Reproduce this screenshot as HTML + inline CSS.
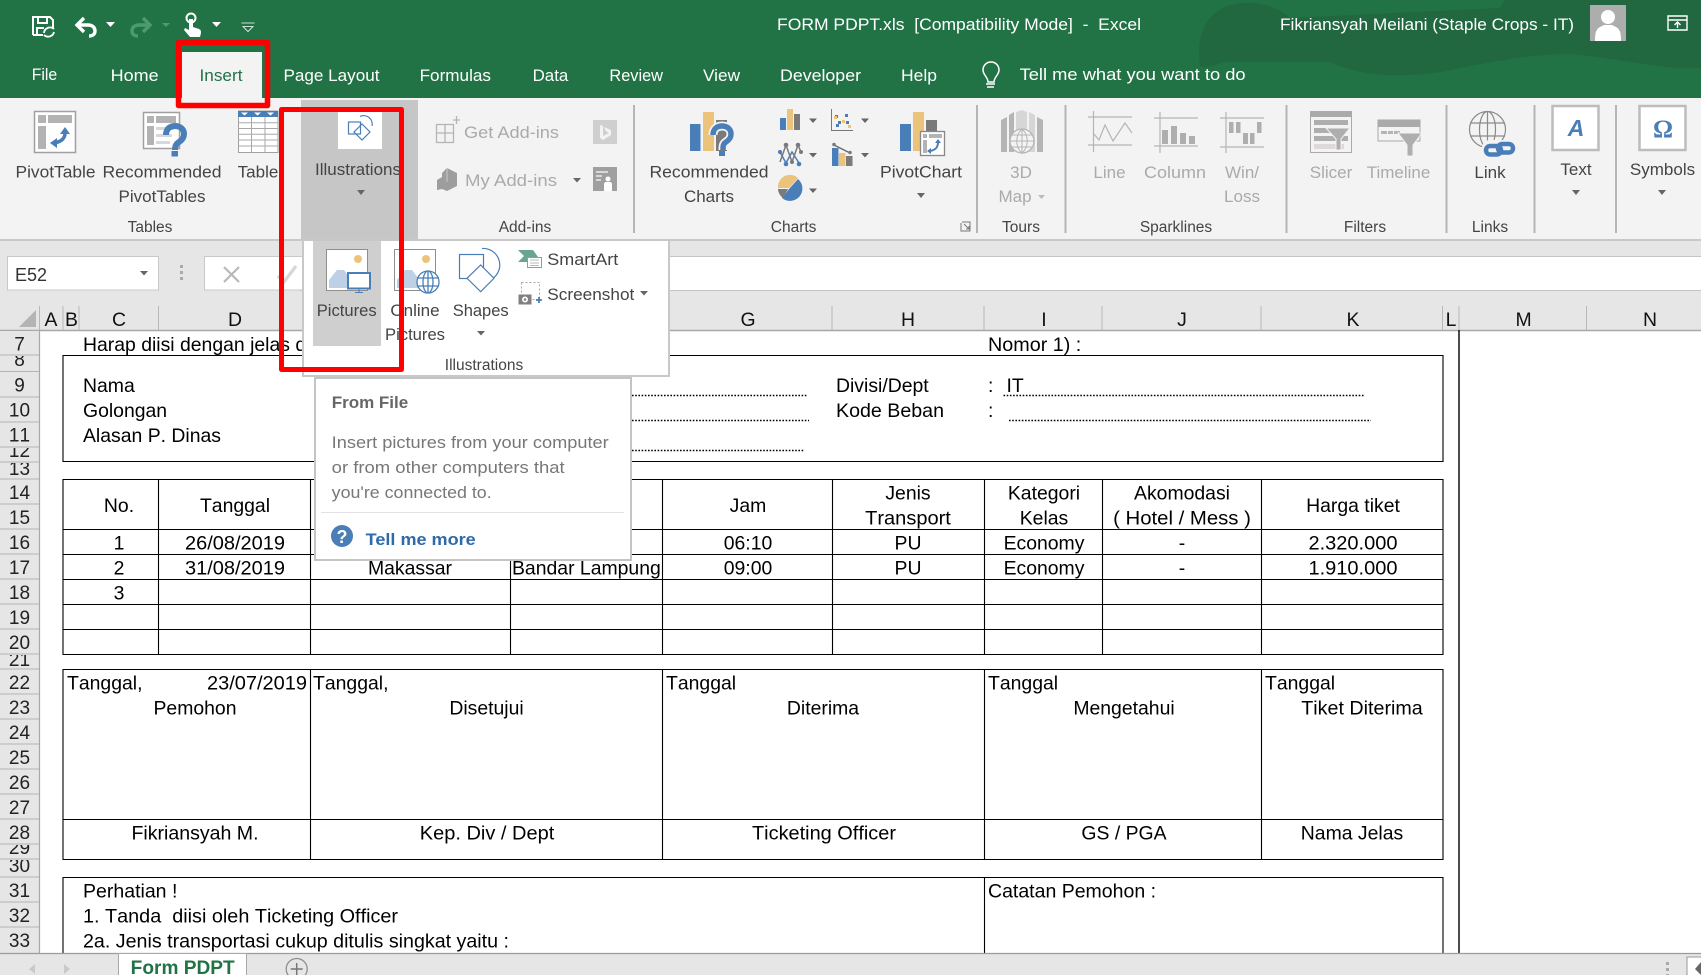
<!DOCTYPE html>
<html lang="en"><head><meta charset="utf-8"><title>FORM PDPT.xls - Excel</title>
<style>
html,body{margin:0;padding:0;background:#fff;overflow:hidden;width:1701px;height:975px}
svg{display:block}
text{font-family:"Liberation Sans",Arial,sans-serif;white-space:pre}
.s{font-size:19.4px;fill:#000;font-kerning:none}
.m{text-anchor:middle}
.r{font-size:17px;fill:#444}
.d{font-size:17px;fill:#aaa}
.t{font-size:17px;fill:#fff}
.h{font-size:19.4px;fill:#111;text-anchor:middle;font-kerning:none}
.n{font-size:19px;fill:#222;text-anchor:middle;font-kerning:none}
.l{fill:none;stroke:#000;stroke-width:1.1}
.b{fill:#4a7eb8}.y{fill:#ecc37a}.g{fill:#7a7a7a}
.a{fill:#666}
</style></head><body>
<svg width="1701" height="975" viewBox="0 0 1701 975" xmlns="http://www.w3.org/2000/svg">
<!-- title bar -->
<rect width="1701" height="98" fill="#217346"/>
<path d="M1200 66C1195 30 1210 4 1245 3C1262 2 1280 8 1290 18L1500 8L1505 0H1701V68C1660 70 1620 58 1570 54C1530 54 1490 62 1440 72C1400 78 1360 76 1330 62C1300 62 1250 62 1225 62C1215 64 1205 70 1200 66z" fill="#21653f" opacity=".85"/>
<!-- QAT -->
<g fill="none" stroke="#fff">
<path d="M33 35V17h17l3 3v9M33 35h10M37 35v-7h7M38 17v6h9v-6" stroke-width="2"/>
<path d="M44 33a6 6 0 0 1 10-4M54 32a6 6 0 0 1-10 3" stroke-width="1.8"/>
<path d="M77 25h11c5 0 7 3 7 6 0 3-2 5-6 5" stroke-width="3.4"/>
<path d="M84 18l-7 7 7 7" stroke-width="3.4"/>
<path d="M150 25h-11c-5 0-7 3-7 6 0 3 2 5 6 5M143 18l7 7-7 7" stroke="#4e9a6f" stroke-width="3.4"/>
<circle cx="191" cy="18" r="4.5" stroke-width="2"/>
</g>
<path d="M189 19h4v8l6 2c2 1 2 2 2 4l-1 4h-10l-6-7 1-2 4 2z" fill="#fff"/>
<path d="M106 22h9l-4.500 5z M212 22h9l-4.500 5z" fill="#fff"/><path d="M162 23h8l-4 4z" fill="#4e9a6f"/>
<path d="M241.500 23h13M243 26.500h10l-5 5z" fill="none" stroke="#fff" stroke-width=".8"/>
<!-- title text -->
<text class="t" x="777" y="30" textLength="364" lengthAdjust="spacingAndGlyphs">FORM PDPT.xls  [Compatibility Mode]  -  Excel</text>
<text class="t" x="1280" y="30" textLength="294" lengthAdjust="spacingAndGlyphs">Fikriansyah Meilani (Staple Crops - IT)</text>
<rect x="1590" y="5" width="36" height="36" fill="#adadad"/>
<circle cx="1608" cy="17" r="7" fill="#fff"/>
<path d="M1595 41c0-8 1-12 5-14l4-2h8l4 2c4 2 5 6 5 14z" fill="#fff"/>
<path d="M1668 16h19v14h-19zM1668 20h19M1677.500 28v-6M1674.500 25l3-3 3 3" fill="none" stroke="#fff" stroke-width="1.400"/>
<!-- tabs -->
<rect x="182" y="52" width="80" height="46" fill="#f3f3f3"/>
<text class="t" x="31.700" y="80" textLength="25.500" lengthAdjust="spacingAndGlyphs">File</text>
<text class="t" x="110.700" y="81" textLength="48" lengthAdjust="spacingAndGlyphs">Home</text>
<text x="199.500" y="81" textLength="43" lengthAdjust="spacingAndGlyphs" style="font-size:17px;fill:#217346">Insert</text>
<text class="t" x="283.500" y="81" textLength="96" lengthAdjust="spacingAndGlyphs">Page Layout</text>
<text class="t" x="419.600" y="81" textLength="71.400" lengthAdjust="spacingAndGlyphs">Formulas</text>
<text class="t" x="532.600" y="81" textLength="35.700" lengthAdjust="spacingAndGlyphs">Data</text>
<text class="t" x="609.400" y="81" textLength="53.600" lengthAdjust="spacingAndGlyphs">Review</text>
<text class="t" x="703" y="81" textLength="37" lengthAdjust="spacingAndGlyphs">View</text>
<text class="t" x="780" y="81" textLength="81" lengthAdjust="spacingAndGlyphs">Developer</text>
<text class="t" x="901" y="81" textLength="36" lengthAdjust="spacingAndGlyphs">Help</text>
<path d="M986 84h9M987 87h7M991 62c-5 0-8 4-8 8 0 5 5 7 5 12h6c0-5 5-7 5-12 0-4-3-8-8-8z" fill="none" stroke="#fff" stroke-width="1.500"/>
<text class="t" x="1019.600" y="80" textLength="226" lengthAdjust="spacingAndGlyphs">Tell me what you want to do</text>
<!-- ribbon -->
<rect y="98" width="1701" height="141" fill="#f3f3f3"/>
<rect y="239" width="1701" height="2" fill="#c8c8c8"/>
<rect x="301" y="100" width="117" height="139" fill="#c6c6c6"/>
<g fill="#b5b5b5">
<rect x="633" y="105" width="2" height="128"/><rect x="976" y="105" width="2" height="128"/><rect x="1064.500" y="105" width="2" height="128"/><rect x="1285.500" y="105" width="2" height="128"/><rect x="1445.500" y="105" width="2" height="128"/><rect x="1533.500" y="105" width="2" height="128"/><rect x="1615" y="105" width="2" height="128"/>
</g>
<!-- PivotTable icon -->
<rect x="34.500" y="111.500" width="41" height="41" fill="#fff" stroke="#a0a0a0" stroke-width="1.500"/>
<path d="M38 115h8v8h-8zM48 115h24v8H48zM38 126h8v23h-8z" fill="#b3b3b3"/>
<path d="M65 130c1 8-3 12-12 13M51 143" fill="none" stroke="#4a7eb8" stroke-width="3.500"/>
<path d="M60 134l5-7 5 7zM57 138v10l-7-5z" fill="#4a7eb8"/>
<!-- Recommended PivotTables -->
<rect x="143.500" y="112.500" width="36" height="36" fill="#fff" stroke="#a0a0a0" stroke-width="1.500"/>
<path d="M147 116h7v7h-7zM156 116h20v7h-20zM147 126h7v19h-7z" fill="#b3b3b3"/><path d="M156 127h18v3h-18zM156 134h16v3h-16zM156 141h14v3h-14z" fill="#d8d8d8"/>
<path d="M166 135c0-6 4-9 9-9 5 0 9 3 9 8 0 4-2 6-5 8-3 2-4 4-4 8" fill="none" stroke="#4a7eb8" stroke-width="6"/>
<rect x="171.500" y="151" width="6.500" height="5.500" fill="#4a7eb8"/>
<!-- Table icon -->
<rect x="238.500" y="111" width="39.500" height="41.500" fill="#fff" stroke="#a0a0a0"/>
<rect x="238" y="111" width="40" height="6" fill="#4a7eb8"/>
<path d="M241 112.500h7l-3.500 3zM254 112.500h7l-3.500 3zM267 112.500h7l-3.500 3z" fill="#fff"/>
<path d="M251.500 117v35M265 117v35M238 122.700h40M238 128.500h40M238 134.300h40M238 140h40M238 146h40" stroke="#a8a8a8" fill="none"/>
<!-- Illustrations -->
<rect x="338" y="112" width="44" height="37" fill="#fff"/>
<g fill="none" stroke="#4a7eb8" stroke-width="1.200"><rect x="348.500" y="122" width="12" height="12"/><path d="M360 116.500a8.500 8.500 0 0 1 12 9.500M362 124l8 8-8 8-8-8z"/></g>
<text class="r" x="358" y="175" text-anchor="middle" textLength="86" lengthAdjust="spacingAndGlyphs">Illustrations</text>
<text class="r m" x="55.500" y="177.500" textLength="80" lengthAdjust="spacingAndGlyphs">PivotTable</text>
<text class="r m" x="162" y="177.500" textLength="119" lengthAdjust="spacingAndGlyphs">Recommended</text>
<text class="r m" x="162" y="202">PivotTables</text>
<text class="r m" x="258" y="177.500">Table</text>
<text x="150" y="232" class="r m" style="font-size:15.500px">Tables</text>
<path d="M357 190h8l-4 5z M1572 190h8l-4 5z M1658 190h8l-4 5z M917 193h8l-4 5z" class="a"/>
<!-- add-ins -->
<g fill="none" stroke="#b5b5b5" stroke-width="1.300"><rect x="436.500" y="124.500" width="17" height="18"/><path d="M445 125v17M437 133h17M453 120h7M456.500 116v8"/></g>
<text class="d" x="464" y="138" textLength="95" lengthAdjust="spacingAndGlyphs">Get Add-ins</text>
<rect x="593" y="120" width="24" height="24" fill="#cfcfcf"/><path d="M600 125l3 1v10l6-3-3-2-2-4 7 3v5l-8 5-3-2z" fill="#f3f3f3"/>
<text class="d" x="465" y="186" textLength="92" lengthAdjust="spacingAndGlyphs">My Add-ins</text>
<path d="M447 168l10 5v13l-10 5-5-2-5 1v-10l5-3v-4z" fill="#9d9d9d"/><path d="M447 168v14" stroke="#c9c9c9"/>
<path d="M573 178h8l-4 4.500z" class="a"/>
<rect x="593" y="167" width="24" height="24" fill="#9f9f9f"/><path d="M596 171h12v2h-12zM596 175h6v2h-6zM596 179h5v2h-5z" fill="#d8d8d8"/><circle cx="608" cy="179" r="2.500" fill="#fff"/><path d="M604 191v-7c0-1 1-2 2-2h4c1 0 2 1 2 2v7z" fill="#fff"/>
<text x="525" y="232" class="r m" style="font-size:15.500px">Add-ins</text>
<!-- recommended charts -->
<rect class="b" x="690" y="124" width="10.500" height="27"/><rect class="y" x="703" y="112" width="11" height="39"/><rect class="g" x="716" y="120" width="11" height="31"/>
<path d="M713 135c0-6 4-9 9-9 5 0 9 3 9 8 0 4-2 6-5 8-3 2-3 4-3 8" fill="none" stroke="#f3f3f3" stroke-width="9"/>
<path d="M713 135c0-6 4-9 9-9 5 0 9 3 9 8 0 4-2 6-5 8-3 2-3 4-3 8" fill="none" stroke="#4a7eb8" stroke-width="5.500"/>
<rect x="719" y="151" width="6" height="5" fill="#4a7eb8"/>
<text class="r m" x="709" y="177.500" textLength="119" lengthAdjust="spacingAndGlyphs">Recommended</text>
<text class="r m" x="709" y="202">Charts</text>
<!-- small charts -->
<rect class="b" x="780" y="118" width="6" height="12"/><rect class="y" x="787" y="109" width="6" height="21"/><rect class="g" x="794" y="114" width="6" height="16"/>
<path d="M831.500 109v21.500H853" fill="none" stroke="#777"/>
<path d="M835 115h3v3h-3zM845 114h3v3h-3zM846 121h3v3h-3zM838 121h3v3h-3zM836 124h3v3h-3z" class="b"/>
<path d="M842 120h3v3h-3zM848 125h3v3h-3zM834 116h3v3h-3z" class="y"/>
<path d="M780 152l6 11 6-11 7 11" fill="none" stroke="#4a7eb8" stroke-width="1.500"/><path d="M780 162l6-17 6 17 6-17 3 7" fill="none" stroke="#7a7a7a" stroke-width="1.500"/>
<circle class="g" cx="786" cy="145" r="2.300"/><circle class="g" cx="798" cy="145" r="2.300"/><circle class="g" cx="792" cy="162" r="2"/><circle class="b" cx="780" cy="152" r="2"/><circle class="b" cx="786" cy="164" r="2.300"/><circle class="b" cx="799" cy="164" r="2.300"/><circle class="g" cx="801" cy="152" r="2"/>
<rect class="b" x="832" y="148" width="6.500" height="18"/><rect class="y" x="839" y="153" width="6.500" height="13"/><rect class="g" x="846" y="156" width="6.500" height="10"/>
<path d="M834 145l16 8" stroke="#666" stroke-width="1.300"/><circle class="g" cx="834" cy="144.500" r="1.800"/><circle class="g" cx="850" cy="152.500" r="1.800"/>
<path d="M789 189l9-10a12 12 0 1 1-16 19z" class="b"/><path d="M778 188a12 12 0 0 1 20-10l-9 10z" class="y"/><path d="M778 189h10l-5 9c-3-2-5-6-5-9z" class="g"/>
<path d="M809 118.500h8l-4 4.500zM861 118.500h8l-4 4.500zM809 153h8l-4 4.500zM861 153h8l-4 4.500zM809 188.500h8l-4 4.500z" class="a"/>
<!-- pivot chart -->
<rect class="b" x="900" y="124" width="11" height="27"/><rect class="y" x="913" y="112" width="11" height="39"/><rect class="g" x="926" y="120" width="11" height="18"/>
<rect x="920.500" y="131.500" width="24" height="24" fill="#fff" stroke="#888" stroke-width="1.300"/>
<path d="M923 134h4v4h-4zM929 134h13v4h-13zM923 140h4v13h-4z" fill="#b3b3b3"/>
<path d="M938 142c0 5-2 8-8 9" fill="none" stroke="#4a7eb8" stroke-width="2"/><path d="M935 143l3-4 3 4zM931 148v6l-4-3z" class="b"/>
<text class="r m" x="921" y="177.500" textLength="82" lengthAdjust="spacingAndGlyphs">PivotChart</text>
<text x="793.600" y="232" class="r m" style="font-size:15.500px">Charts</text>
<path d="M962 222h8v9h-9v-8M964 224l5 5M969 226v3h-3" fill="none" stroke="#777"/>
<!-- 3d map -->
<path d="M1001 120l6-3v35h-6zM1009 115l5-3v40h-5zM1037 117l6 3v32h-6z" fill="#b5b5b5"/><path d="M1016 112l6-2 5 2v40h-11zM1029 112l6 3v37h-6z" fill="#d6d6d6"/>
<circle cx="1022" cy="141" r="12" fill="#f3f3f3" stroke="#b5b5b5" stroke-width="1.300"/><path d="M1010 141h24M1022 129v24M1012 135h20M1012 147h20M1022 129c-7 6-7 18 0 24M1022 129c7 6 7 18 0 24" fill="none" stroke="#b5b5b5"/>
<text class="d m" x="1021" y="178">3D</text><text class="d m" x="1015" y="202">Map</text><path d="M1038 195h7l-3.500 4z" fill="#bbb"/>
<text x="1021" y="232" class="r m" style="font-size:15.500px">Tours</text>
<!-- sparklines -->
<g stroke="#b5b5b5" fill="none" stroke-width="1.200">
<path d="M1088 117h44M1088 145h44M1093.500 111v41M1093 133l6 7 6-15 8 16 12-18 7 10"/>
<path d="M1154 118h44M1154 146h44M1160 112v41"/>
<path d="M1220 118h44M1220 147h44M1226 112v41"/>
</g>
<path d="M1162 130h6v14h-6zM1171 126h6v18h-6zM1180 133h6v11h-6zM1189 136h6v8h-6zM1229 122h4.500v11h-4.500zM1236 122h4.500v11h-4.500zM1243 133h5v11h-5zM1250 133h4.500v11h-4.500zM1257 122h4.500v11h-4.500z" fill="#aeaeae"/>
<text class="d m" x="1109.500" y="178">Line</text><text class="d m" x="1175" y="178" textLength="62" lengthAdjust="spacingAndGlyphs">Column</text><text class="d m" x="1242" y="178">Win/</text><text class="d m" x="1242" y="202">Loss</text>
<text x="1176" y="232" class="r m" style="font-size:15.500px">Sparklines</text>
<!-- filters -->
<rect x="1310.500" y="111.500" width="41" height="41" fill="#f3f3f3" stroke="#aaa"/><rect x="1310" y="111" width="42" height="6" fill="#aaa"/>
<path d="M1314 120h34v5h-34zM1314 128h18v5h-18zM1314 136h34v5h-34z" fill="#aeaeae"/><path d="M1314 144h30v5h-30z" fill="#dcd8dc"/>
<path d="M1326 128h24l-9 11v11h-5v-11z" fill="#aeaeae" stroke="#f3f3f3"/>
<rect x="1378" y="120" width="42" height="21" fill="#f3f3f3" stroke="#aaa"/><rect x="1378" y="120" width="42" height="7" fill="#aaa"/>
<path d="M1381 131h6v3h-6zM1388 131h5v3h-5zM1394 131h6v3h-6z" fill="#b5b5b5"/>
<path d="M1398 133h24l-9 12v11h-6v-11z" fill="#aeaeae" stroke="#f3f3f3"/>
<text class="d m" x="1331" y="178">Slicer</text><text class="d m" x="1398.500" y="178">Timeline</text>
<text x="1365" y="232" class="r m" style="font-size:15.500px">Filters</text>
<!-- link -->
<g fill="none" stroke="#8a8a8a" stroke-width="1.200"><circle cx="1487.500" cy="129.500" r="18"/><ellipse cx="1487.500" cy="129.500" rx="8" ry="18"/><path d="M1487.500 111v37M1470 123h35M1470 136h35"/></g>
<rect x="1482" y="140" width="34" height="18" fill="#f3f3f3" rx="8"/>
<g fill="none" stroke="#4a7eb8" stroke-width="4.500"><rect x="1486" y="146" width="15" height="8.500" rx="4.200"/><rect x="1498" y="144" width="15" height="8.500" rx="4.200"/></g>
<text class="r m" x="1490" y="178">Link</text>
<text x="1490" y="232" class="r m" style="font-size:15.500px">Links</text>
<!-- text / symbols -->
<rect x="1552.500" y="106" width="46" height="44" fill="#fff" stroke="#bcbcbc" stroke-width="2.500"/>
<text x="1576" y="136" text-anchor="middle" style="font-style:italic;font-size:23px;fill:#4a7eb8;font-weight:bold">A</text>
<text class="r m" x="1576" y="175">Text</text>
<rect x="1639.500" y="106" width="46" height="44" fill="#fff" stroke="#bcbcbc" stroke-width="2.500"/>
<text x="1663" y="137" text-anchor="middle" style="font-family:'Liberation Serif',serif;font-weight:bold;font-size:25px;fill:#4a7eb8">Ω</text>
<text class="r m" x="1662.500" y="175">Symbols</text>
<!-- formula area -->
<rect y="241" width="1701" height="89" fill="#e6e6e6"/>
<rect x="300" y="256" width="1401" height="34" fill="#fff"/><path d="M300 256.500h1401M300 290.500h1401" stroke="#c4c4c4"/>
<rect x="7.500" y="256.500" width="151" height="33.500" fill="#fff" stroke="#c8c8c8"/>
<text x="15" y="281" style="font-size:18px;fill:#333">E52</text>
<path d="M140 271h8l-4 4.500z" class="a"/>
<path d="M180 265h3v3h-3zM180 271h3v3h-3zM180 277h3v3h-3z" fill="#aaa"/>
<rect x="204.500" y="256.500" width="110" height="33.500" fill="#fff" stroke="#c8c8c8"/>
<path d="M224 267l15 15M239 267l-15 15" stroke="#b8b8b8" stroke-width="2.200"/><path d="M278 276l6 6 12-16" fill="none" stroke="#d6d6d6" stroke-width="3.200"/>
<!-- headers -->
<path d="M0 330.500h1701" stroke="#a8a8a8" stroke-width="1.400"/>
<path d="M36 310v17H19z" fill="#b4b4b4"/>
<g stroke="#b8b8b8"><path d="M39.500 306v24M63 306v24M79 306v24M158.500 306v24M310.500 306v24M510 306v24M662 306v24M832 306v24M984 306v24M1102 306v24M1261 306v24M1442.500 306v24M1459 306v24M1586.500 306v24"/></g>
<text class="h" x="51" y="326">A</text><text class="h" x="71.500" y="326">B</text><text class="h" x="119" y="326">C</text><text class="h" x="235" y="326">D</text><text class="h" x="748" y="326">G</text><text class="h" x="908" y="326">H</text><text class="h" x="1044" y="326">I</text><text class="h" x="1182" y="326">J</text><text class="h" x="1353" y="326">K</text><text class="h" x="1451" y="326">L</text><text class="h" x="1523.600" y="326">M</text><text class="h" x="1650" y="326">N</text>
<!-- row headers -->
<rect y="331" width="39.500" height="622" fill="#e6e6e6"/>
<path d="M39.500 331v622" stroke="#a8a8a8" stroke-width="1.200"/>
<g stroke="#b4b4b4"><path d="M0 355h39M0 371.500h39M0 397h39M0 422h39M0 447h39M0 462h39M0 479h39M0 504h39M0 529h39M0 554h39M0 579h39M0 604h39M0 629h39M0 654h39M0 669h39M0 694h39M0 719h39M0 744h39M0 769h39M0 794h39M0 819h39M0 844h39M0 859h39M0 877h39M0 902h39M0 927h39"/></g>
<text class="n" x="19.500" y="350.500">7</text>
<svg x="0" y="356" width="39" height="15"><text class="n" x="19.500" y="10">8</text></svg>
<text class="n" x="19.500" y="391.500">9</text><text class="n" x="19.500" y="416.500">10</text><text class="n" x="19.500" y="441.500">11</text>
<svg x="0" y="448" width="39" height="14"><text class="n" x="19.500" y="9">12</text></svg>
<svg x="0" y="463" width="39" height="16"><text class="n" x="19.500" y="12">13</text></svg>
<text class="n" x="19.500" y="499">14</text><text class="n" x="19.500" y="524">15</text><text class="n" x="19.500" y="549">16</text><text class="n" x="19.500" y="574">17</text><text class="n" x="19.500" y="599">18</text><text class="n" x="19.500" y="624">19</text><text class="n" x="19.500" y="649">20</text>
<svg x="0" y="655" width="39" height="14"><text class="n" x="19.500" y="11">21</text></svg>
<text class="n" x="19.500" y="689">22</text><text class="n" x="19.500" y="714">23</text><text class="n" x="19.500" y="739">24</text><text class="n" x="19.500" y="764">25</text><text class="n" x="19.500" y="789">26</text><text class="n" x="19.500" y="814">27</text><text class="n" x="19.500" y="839">28</text>
<svg x="0" y="845" width="39" height="14"><text class="n" x="19.500" y="9">29</text></svg>
<svg x="0" y="860" width="39" height="17"><text class="n" x="19.500" y="12">30</text></svg>
<text class="n" x="19.500" y="897">31</text><text class="n" x="19.500" y="922">32</text><text class="n" x="19.500" y="947">33</text>
<!-- sheet lines -->
<path class="l" d="M1459 330v623" style="stroke-width:1.400"/>
<path class="l" d="M63 355.500H1443V461.500H63zM63 479.500H1443V654.500H63zM63 529.500H1443M63 554.500H1443M63 579.500H1443M63 604.500H1443M63 629.500H1443M158.500 479V654M310.500 479V654M510.500 479V654M662.500 479V654M832.500 479V654M984.500 479V654M1102.500 479V654M1261.500 479V654"/>
<path class="l" d="M63 669.500H1443V859.500H63zM63 819.500H1443M310.500 669V859M662.500 669V859M984.500 669V859M1261.500 669V859"/>
<path class="l" d="M63 953V877.500H1443V953M984.500 877V953"/>
<g stroke="#000" stroke-width="1.600" stroke-dasharray="1.600 1.600" fill="none"><path d="M632 395.500H807M632 420.500H809M632 450.500H804M1003.500 395.500H1365M1009 420.500H1371"/></g>
<!-- sheet text -->
<g transform="translate(0 .3)">
<text class="s" x="83" y="350.500">Harap diisi dengan jelas dan lengkap</text>
<text class="s" x="988" y="350.500" textLength="93.300" lengthAdjust="spacingAndGlyphs">Nomor 1) :</text>
<text class="s" x="83" y="391.500">Nama</text><text class="s" x="83" y="416.500">Golongan</text><text class="s" x="83" y="441.500" textLength="138" lengthAdjust="spacingAndGlyphs">Alasan P. Dinas</text>
<text class="s" x="836" y="391.500">Divisi/Dept</text><text class="s" x="836" y="416.500" textLength="108" lengthAdjust="spacingAndGlyphs">Kode Beban</text>
<text class="s" x="988" y="391.500">:</text><text class="s" x="988" y="416.500">:</text><text class="s" x="1006.500" y="391.500">IT</text>
<text class="s m" x="119" y="511.700">No.</text><text class="s m" x="235" y="511.700">Tanggal</text><text class="s m" x="748" y="511.700">Jam</text>
<text class="s m" x="908" y="499">Jenis</text><text class="s m" x="908" y="524" textLength="85.700" lengthAdjust="spacingAndGlyphs">Transport</text>
<text class="s m" x="1044" y="499">Kategori</text><text class="s m" x="1044" y="524">Kelas</text>
<text class="s m" x="1182" y="499">Akomodasi</text><text class="s m" x="1182" y="524" textLength="137.800" lengthAdjust="spacingAndGlyphs">( Hotel / Mess )</text>
<text class="s m" x="1353" y="511.700">Harga tiket</text>
<text class="s m" x="119" y="549">1</text><text class="s m" x="235" y="549" textLength="100" lengthAdjust="spacingAndGlyphs">26/08/2019</text><text class="s m" x="748" y="549">06:10</text><text class="s m" x="908" y="549">PU</text><text class="s m" x="1044" y="549">Economy</text><text class="s m" x="1182" y="549">-</text><text class="s m" x="1353" y="549" textLength="89" lengthAdjust="spacingAndGlyphs">2.320.000</text>
<text class="s m" x="119" y="574">2</text><text class="s m" x="235" y="574" textLength="100" lengthAdjust="spacingAndGlyphs">31/08/2019</text><text class="s m" x="410" y="574">Makassar</text><text class="s" x="512" y="574">Bandar Lampung</text><text class="s m" x="748" y="574">09:00</text><text class="s m" x="908" y="574">PU</text><text class="s m" x="1044" y="574">Economy</text><text class="s m" x="1182" y="574">-</text><text class="s m" x="1353" y="574" textLength="89" lengthAdjust="spacingAndGlyphs">1.910.000</text>
<text class="s m" x="119" y="599">3</text>
<text class="s" x="67" y="689">Tanggal,</text><text class="s" x="207" y="689" textLength="100" lengthAdjust="spacingAndGlyphs">23/07/2019</text><text class="s" x="313" y="689">Tanggal,</text><text class="s" x="666" y="689">Tanggal</text><text class="s" x="988" y="689">Tanggal</text><text class="s" x="1265" y="689">Tanggal</text>
<text class="s m" x="195" y="714">Pemohon</text><text class="s m" x="486.500" y="714">Disetujui</text><text class="s m" x="823" y="714">Diterima</text><text class="s m" x="1124" y="714">Mengetahui</text><text class="s m" x="1362" y="714" textLength="121.500" lengthAdjust="spacingAndGlyphs">Tiket Diterima</text>
<text class="s m" x="195" y="839" textLength="127" lengthAdjust="spacingAndGlyphs">Fikriansyah M.</text><text class="s m" x="487" y="839" textLength="134.500" lengthAdjust="spacingAndGlyphs">Kep. Div / Dept</text><text class="s m" x="824" y="839" textLength="144" lengthAdjust="spacingAndGlyphs">Ticketing Officer</text><text class="s m" x="1124" y="839">GS / PGA</text><text class="s m" x="1352" y="839">Nama Jelas</text>
<text class="s" x="83" y="897" textLength="94.400" lengthAdjust="spacingAndGlyphs">Perhatian !</text><text class="s" x="83" y="922" textLength="315" lengthAdjust="spacingAndGlyphs">1. Tanda  diisi oleh Ticketing Officer</text><text class="s" x="83" y="947" textLength="426" lengthAdjust="spacingAndGlyphs">2a. Jenis transportasi cukup ditulis singkat yaitu :</text>
<text class="s" x="988" y="897" textLength="168" lengthAdjust="spacingAndGlyphs">Catatan Pemohon :</text>
</g>
<!-- bottom bar -->
<rect y="953" width="1701" height="22" fill="#e6e6e6"/><path d="M0 953.500h1701" stroke="#9c9c9c" stroke-width="1.200"/>
<path d="M118.500 975V953.500H246.500V975" fill="#fff" stroke="#a8a8a8"/>
<text x="130.700" y="974" textLength="104" lengthAdjust="spacingAndGlyphs" style="font-weight:bold;font-size:19px;fill:#217346">Form PDPT</text>
<path d="M35 964l-6 5 6 5zM64 964l6 5-6 5z" fill="#c9c9c9"/>
<circle cx="296.700" cy="969" r="10.500" fill="#e6e6e6" stroke="#8a8a8a" stroke-width="1.200"/><path d="M296.700 963v12M290.700 969h12" stroke="#777" stroke-width="1.500"/>
<path d="M1666 962h3v3h-3zM1666 968h3v3h-3zM1666 974h3v1h-3z" fill="#a8a8a8"/>
<path d="M1687 975v-18h14" fill="#fff" stroke="#9a9a9a"/><rect x="1688" y="958" width="13" height="17" fill="#fff"/><path d="M1701 962l-6 7 6 6z" fill="#666"/>
<!-- dropdown panel -->
<rect x="303" y="240" width="366" height="136" fill="#fff" stroke="#c8c8c8" stroke-width="2"/>
<rect x="313" y="241" width="68" height="105" fill="#cfcfcf"/>
<rect x="326.500" y="249.500" width="41" height="41" fill="#fff" stroke="#8f8f8f"/>
<circle cx="358" cy="259" r="4" fill="#ecc37a"/>
<path d="M329 288v-8l8-10h7l6 8v10z" fill="#bdd0e6"/>
<rect x="348" y="273" width="22" height="15.500" fill="#fff" stroke="#4a7eb8" stroke-width="2"/>
<path d="M359 289v3M355 292.500h8" stroke="#4a7eb8"/>
<rect x="394.500" y="249.500" width="41" height="41" fill="#fff" stroke="#8f8f8f"/>
<circle cx="426" cy="259" r="4" fill="#ecc37a"/>
<path d="M397 288v-8l8-10h7l6 8v10z" fill="#bdd0e6"/>
<g fill="#fff" stroke="#4a7eb8" stroke-width="1.300"><circle cx="428" cy="282" r="11"/><ellipse cx="428" cy="282" rx="5" ry="11" fill="none"/><path d="M417 278h22M417 286h22M428 271v22" fill="none"/></g>
<g fill="none" stroke="#4a7eb8" stroke-width="1.200"><path d="M482 248.500a16.500 16.500 0 0 1 12 29"/><rect x="459.500" y="254.500" width="24" height="24"/><path d="M480.700 265l13.300 13.300-13.300 13.400-13.700-13.400z" fill="#fff"/></g>
<path d="M518 250h15l5 7-5 0v3h-5l-1 2h-9l6-6z" fill="#6aa58d"/>
<rect x="527.500" y="257.500" width="14" height="10" fill="#fff" stroke="#999"/><path d="M530 260h9M530 263h9M530 265.500h9" stroke="#bbb"/>
<rect x="521.500" y="282.500" width="18" height="17" fill="none" stroke="#aaa" stroke-dasharray="2 2"/>
<rect x="518" y="294" width="14" height="11" fill="#808080" stroke="#fff"/><circle cx="525" cy="299.500" r="3" fill="#fff"/><circle cx="525" cy="299.500" r="1.300" fill="#808080"/>
<path d="M539 297v6M536 300h6" stroke="#4a7eb8" stroke-width="1.800"/>
<text class="r m" x="346.700" y="316" textLength="60" lengthAdjust="spacingAndGlyphs">Pictures</text>
<text class="r m" x="415" y="316">Online</text><text class="r m" x="415" y="340" textLength="60" lengthAdjust="spacingAndGlyphs">Pictures</text>
<text class="r m" x="480.700" y="316" textLength="56" lengthAdjust="spacingAndGlyphs">Shapes</text>
<path d="M477 331h8l-4 4.500zM640 291h8l-4 4.500z" class="a"/>
<text class="r" x="547.300" y="265" textLength="71" lengthAdjust="spacingAndGlyphs">SmartArt</text>
<text class="r" x="547.300" y="300" textLength="87" lengthAdjust="spacingAndGlyphs">Screenshot</text>
<text x="484" y="370" class="r m" style="font-size:15.500px">Illustrations</text>
<!-- tooltip -->
<rect x="315" y="378" width="316" height="182" fill="#fff" stroke="#c4c4c4" stroke-width="2"/>
<text x="331.700" y="408" style="font-weight:bold;font-size:17px;fill:#666">From File</text>
<text x="331.700" y="448" textLength="277" lengthAdjust="spacingAndGlyphs" style="font-size:17px;fill:#777">Insert pictures from your computer</text>
<text x="331.700" y="473" textLength="233" lengthAdjust="spacingAndGlyphs" style="font-size:17px;fill:#777">or from other computers that</text>
<text x="331.700" y="498" textLength="160" lengthAdjust="spacingAndGlyphs" style="font-size:17px;fill:#777">you're connected to.</text>
<path d="M321 512.500h303" stroke="#e2e2e2"/>
<circle cx="342" cy="536" r="11" fill="#4a7eb8"/>
<text x="342" y="543" text-anchor="middle" style="font-weight:bold;font-size:18px;fill:#fff">?</text>
<text x="365.700" y="545" textLength="110" lengthAdjust="spacingAndGlyphs" style="font-weight:bold;font-size:17px;fill:#2f6aa8">Tell me more</text>
<!-- red annotations -->
<path d="M178.500 42.500H267.500V105.500H178.500z" fill="none" stroke="#ff0000" stroke-width="5.500" stroke-linejoin="round"/>
<path d="M281.500 109.500H401.500V369.500H281.500z" fill="none" stroke="#ff0000" stroke-width="5" stroke-linejoin="round"/>
</svg>
</body></html>
